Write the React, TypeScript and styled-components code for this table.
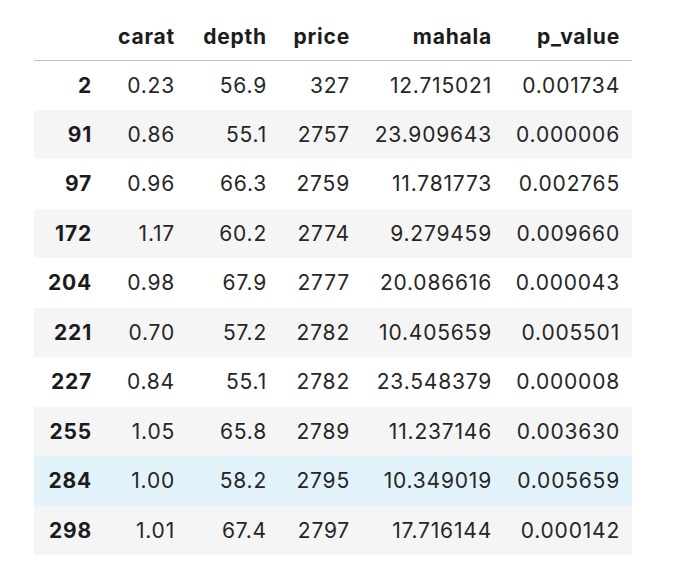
import React from "react";
import styled, { createGlobalStyle } from "styled-components";

const Global = createGlobalStyle`
  html, body { margin: 0; padding: 0; background: #ffffff; }
  body { font-family: Inter, "Liberation Sans", Arial, sans-serif; }
`;

const Page = styled.div`
  padding: 13px 0 0 34px;
`;

const Table = styled.table`
  border-collapse: collapse;
  border-spacing: 0;
  table-layout: fixed;
  width: 598px;
  font-size: 21px;
  letter-spacing: 0.8px;
  color: #262626;
`;

const HeadRow = styled.tr`
  height: 47px;
  border-bottom: 1px solid #bdbdbd;
`;

const HeadCell = styled.th`
  font-weight: 700;
  color: #1c1c1c;
  text-align: right;
  padding: 0 12px 0 0;
  white-space: nowrap;
`;

const Row = styled.tr<{ $bg: string }>`
  height: 49.5px;
  background: ${(p) => p.$bg};
`;

const IndexCell = styled.th`
  font-weight: 700;
  color: #1c1c1c;
  text-align: right;
  padding: 0 12px 0 0;
`;

const Cell = styled.td`
  text-align: right;
  padding: 0 12px 0 0;
  white-space: nowrap;
`;

const widths = [70, 83, 92, 83, 142, 128];
const columns = ["carat", "depth", "price", "mahala", "p_value"];

const rows: [string, string, string, string, string, string][] = [
  ["2", "0.23", "56.9", "327", "12.715021", "0.001734"],
  ["91", "0.86", "55.1", "2757", "23.909643", "0.000006"],
  ["97", "0.96", "66.3", "2759", "11.781773", "0.002765"],
  ["172", "1.17", "60.2", "2774", "9.279459", "0.009660"],
  ["204", "0.98", "67.9", "2777", "20.086616", "0.000043"],
  ["221", "0.70", "57.2", "2782", "10.405659", "0.005501"],
  ["227", "0.84", "55.1", "2782", "23.548379", "0.000008"],
  ["255", "1.05", "65.8", "2789", "11.237146", "0.003630"],
  ["284", "1.00", "58.2", "2795", "10.349019", "0.005659"],
  ["298", "1.01", "67.4", "2797", "17.716144", "0.000142"],
];

const HOVER_ROW = 8;

export default function App() {
  return (
    <>
      <Global />
      <Page>
        <Table>
          <colgroup>
            {widths.map((w, i) => (
              <col key={i} style={{ width: w }} />
            ))}
          </colgroup>
          <thead>
            <HeadRow>
              <HeadCell />
              {columns.map((c) => (
                <HeadCell key={c}>{c}</HeadCell>
              ))}
            </HeadRow>
          </thead>
          <tbody>
            {rows.map((r, i) => (
              <Row
                key={r[0]}
                $bg={i === HOVER_ROW ? "#e2f3fc" : i % 2 === 1 ? "#f5f5f5" : "#ffffff"}
              >
                <IndexCell>{r[0]}</IndexCell>
                {r.slice(1).map((v, j) => (
                  <Cell key={j}>{v}</Cell>
                ))}
              </Row>
            ))}
          </tbody>
        </Table>
      </Page>
    </>
  );
}
